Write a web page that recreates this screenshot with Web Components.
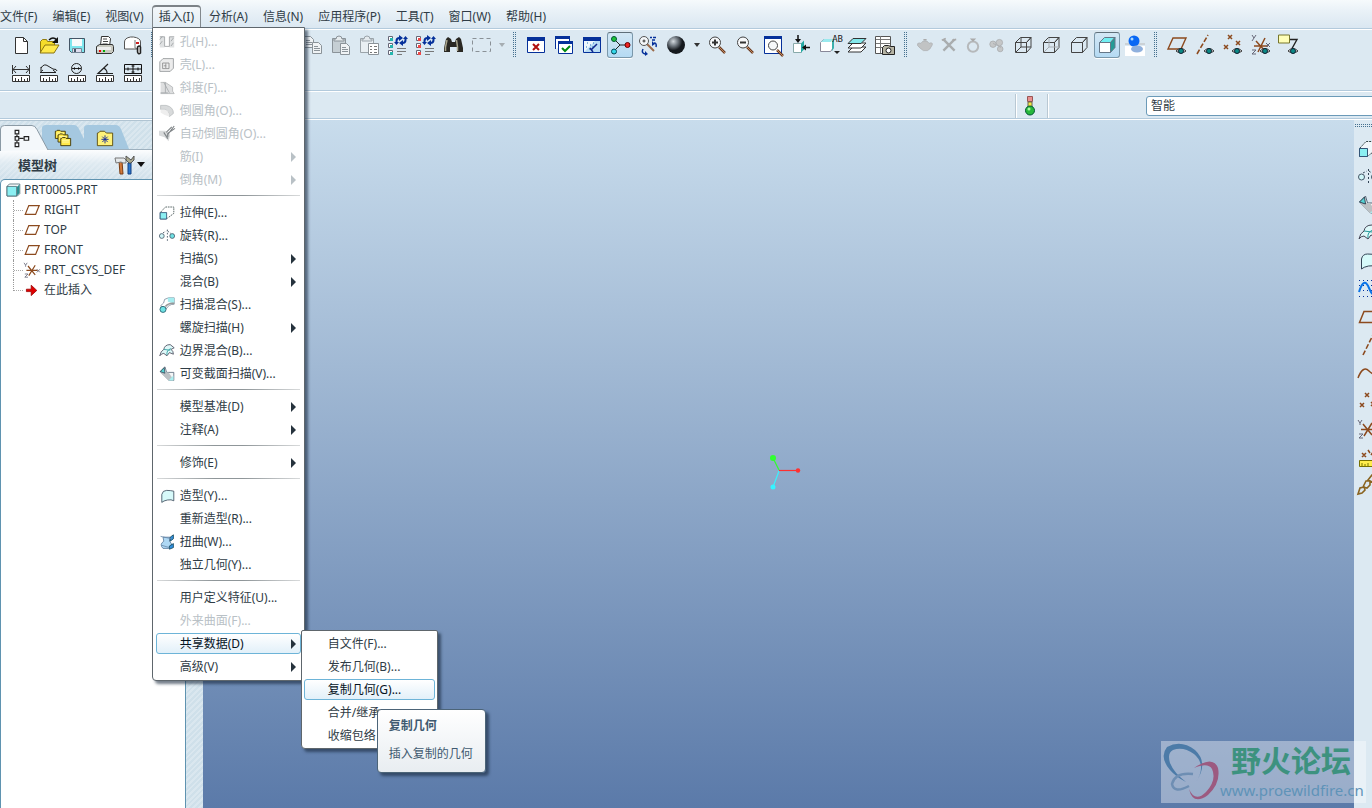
<!DOCTYPE html>
<html lang="zh-CN">
<head>
<meta charset="utf-8">
<title>PRT0005</title>
<style>
html,body{height:100%}
body{margin:0;overflow:hidden;font:12px/16px "Noto Sans","Noto Sans CJK SC",sans-serif;color:#2f3c46;
--bar:#dce9f2;--edge:#b3cadc;--ink:#2f3c46}
</style>
</head>
<body>
<cad-window>
  <cad-menubar slot="menubar">
    <menubar-item>文件(F)</menubar-item>
    <menubar-item>编辑(E)</menubar-item>
    <menubar-item>视图(V)</menubar-item>
    <menubar-item open>插入(I)
      <menu-panel slot="menu">
        <menu-item icon="hole" disabled>孔(H)...</menu-item>
        <menu-item icon="shell" disabled>壳(L)...</menu-item>
        <menu-item icon="draft" disabled>斜度(F)...</menu-item>
        <menu-item icon="round" disabled>倒圆角(O)...</menu-item>
        <menu-item icon="autoround" disabled>自动倒圆角(O)...</menu-item>
        <menu-item more disabled>筋(I)</menu-item>
        <menu-item more disabled>倒角(M)</menu-item>
        <menu-separator></menu-separator>
        <menu-item icon="extrude">拉伸(E)...</menu-item>
        <menu-item icon="revolve">旋转(R)...</menu-item>
        <menu-item more>扫描(S)</menu-item>
        <menu-item more>混合(B)</menu-item>
        <menu-item icon="sweepblend">扫描混合(S)...</menu-item>
        <menu-item more>螺旋扫描(H)</menu-item>
        <menu-item icon="boundary">边界混合(B)...</menu-item>
        <menu-item icon="varsweep">可变截面扫描(V)...</menu-item>
        <menu-separator></menu-separator>
        <menu-item more>模型基准(D)</menu-item>
        <menu-item more>注释(A)</menu-item>
        <menu-separator></menu-separator>
        <menu-item more>修饰(E)</menu-item>
        <menu-separator></menu-separator>
        <menu-item icon="style">造型(Y)...</menu-item>
        <menu-item>重新造型(R)...</menu-item>
        <menu-item icon="warp">扭曲(W)...</menu-item>
        <menu-item>独立几何(Y)...</menu-item>
        <menu-separator></menu-separator>
        <menu-item>用户定义特征(U)...</menu-item>
        <menu-item disabled>外来曲面(F)...</menu-item>
        <menu-item more current>共享数据(D)
          <menu-panel slot="over" class="sub">
            <menu-item>自文件(F)...</menu-item>
            <menu-item>发布几何(B)...</menu-item>
            <menu-item current>复制几何(G)...
              <help-tip slot="over"><span slot="title">复制几何</span>插入复制的几何</help-tip>
            </menu-item>
            <menu-item>合并/继承</menu-item>
            <menu-item>收缩包络</menu-item>
          </menu-panel>
        </menu-item>
        <menu-item more>高级(V)</menu-item>
      </menu-panel>
    </menubar-item>
    <menubar-item>分析(A)</menubar-item>
    <menubar-item>信息(N)</menubar-item>
    <menubar-item>应用程序(P)</menubar-item>
    <menubar-item>工具(T)</menubar-item>
    <menubar-item>窗口(W)</menubar-item>
    <menubar-item>帮助(H)</menubar-item>
  </cad-menubar>

  <cad-toolbars slot="toolbars"></cad-toolbars>
  <status-bar slot="status"></status-bar>

  <model-tree slot="tree" heading="模型树">
    <tree-node icon="part" root>PRT0005.PRT</tree-node>
    <tree-node icon="plane">RIGHT</tree-node>
    <tree-node icon="plane">TOP</tree-node>
    <tree-node icon="plane">FRONT</tree-node>
    <tree-node icon="csys">PRT_CSYS_DEF</tree-node>
    <tree-node icon="insert" last>在此插入</tree-node>
  </model-tree>
  <graphics-view slot="view"></graphics-view>
  <feature-bar slot="features"></feature-bar>
  <forum-mark slot="mark"><span slot="name">野火论坛</span>www.proewildfire.cn</forum-mark>
</cad-window>

<script>
const define = (name, css, html, setup) => {
  const template = document.createElement('template');
  template.innerHTML = `<style>:host,*{box-sizing:border-box}${css}</style>${html}`;
  customElements.define(name, class extends HTMLElement {
    connectedCallback() {
      if (this.shadowRoot) return;
      this.attachShadow({mode: 'open'}).append(template.content.cloneNode(true));
      if (setup) setup(this, this.shadowRoot);
    }
  });
};

/* Icons share a 20 x 20 grid. */
const eye = '<path d="M9 16q5-5 10 0q-5 4-10 0z" fill="#fff" stroke="#333"/><circle cx="14" cy="16" r="2.500" fill="#0a8a86" stroke="#123"/>';
const ruler = '<path d="M1.500 12.500h17v6h-17z" fill="#fff" stroke="#333"/><path d="M4.500 18v-3M7.500 18v-2M10.500 18v-4M13.500 18v-2M16.500 18v-3" stroke="#333"/>';
const cube = (c, face='none', top='none', side='none') => `<path d="M2.500 7.500h11v10h-11z" fill="${face}" stroke="${c}"/><path d="M2.500 7.500l5-5h10.500l-4.500 5z" fill="${top}" stroke="${c}"/><path d="M13.500 7.500l4.500-5v10l-4.500 5z" fill="${side}" stroke="${c}"/>`;
const glass = '<path d="M12 12l6 6" stroke="#6b3a20" stroke-width="2.500"/><path d="M12 12l6 6" stroke="#c08a60"/><circle cx="8" cy="7.500" r="5.500" fill="#f6f8fa" stroke="#444"/>';
const win = '<path d="M1.500 2.500h17v15h-17z" fill="#fff" stroke="#05309a" /><path d="M1 2h18v4H1z" fill="#05309a"/>';
const checklist = c => `<g fill="#fff" stroke="#667"><path d="M1.500 1.500h4v4h-4zM1.500 8.500h4v4h-4zM1.500 15.500h4v4h-4z"/></g><path d="M3 3h3v3H3zM3 10h3v3H3zM3 17h3v3H3z" fill="${c}"/><path d="M10 13.500h9M10 16.500h9M10 19.500h5" stroke="#777"/><path d="M9.500 7V6q0-3 3-3M18.500 3v2q0 3-3 3" fill="none" stroke="#05309a" stroke-width="2"/><path d="M12 0l4 3-4 3zM16 5l-4 3 4 3zM7 7h5l-2.500 3zM16 4h5l-2.500-3z" fill="#05309a"/>`;
const page = (x,y,c='#8b9399') => `<path d="M${x+.5} ${y+.5}h6l3 3v8h-9z" fill="#f0f3f5" stroke="${c}"/><path d="M${x+2} ${y+4.5}h4M${x+2} ${y+6.5}h6M${x+2} ${y+8.5}h6" stroke="${c}"/>`;
const board = '<path d="M1.500 3.500h13v14h-13z" fill="#c6cfd4" stroke="#8b9399"/><path d="M5 4q0-3 3-3t3 3h2v2H3V4z" fill="#e6ebee" stroke="#8b9399"/>';
const folder = (x,y) => `<path d="M${x+.5} ${y+9.5}v-8h1l1-1h3l1 1h5v8z" fill="#ffe94a" stroke="#3a3208"/><path d="M${x+2} ${y+3.5}h8M${x+2} ${y+5.5}h8" stroke="#fff8b0"/>`;
const cross = (x,y,s=2) => `M${x-s} ${y-s}l${2*s} ${2*s}M${x+s} ${y-s}l${-2*s} ${2*s}`;
const icons = {
  new:'<path d="M4.500 2.500h8l4 4v12h-12z" fill="#fff" stroke="#333"/><path d="M12.500 2.500v4h4" fill="none" stroke="#333"/>',
  open:'<path d="M1.500 18V6.500l2-2h4l1 2h7V10" fill="#f5dc2a" stroke="#907a10"/><path d="M1 18l5-8h14l-5 8z" fill="#ffe94a" stroke="#8a7410"/><path d="M10 5q4-4 8 0" fill="none" stroke="#111" stroke-width="1.500"/><path d="M19 2v6h-6z" fill="#111"/>',
  save:'<path d="M2.500 3.500h15v14h-13l-2-2z" fill="#7fe6ee" stroke="#456"/><path d="M5 4h10v7H5z" fill="#f8fbfc"/><path d="M5.500 13.500h9v4h-9z" fill="#dde" stroke="#789"/><path d="M7 14h2v3H7z" fill="#456"/>',
  print:'<path d="M5.500 10.500l1-9h7l2 2-1 8z" fill="#fff" stroke="#333"/><path d="M8 4h4M8 6.500h5M7.500 9h5" stroke="#444"/><path d="M1.500 11.500l3-2h13l1 2v5l-2 2h-15z" fill="#c8c9c0" stroke="#333"/><path d="M2 12h14v3H2z" fill="#eee"/><path d="M4 15h2v2H4z" fill="#e00"/><path d="M8 15h2v2H8z" fill="#0a0"/>',
  mail:'<path d="M1.500 14V7q0-4 6-5h3q7 1 7 5v7z" fill="#fff" stroke="#555"/><path d="M12 5v8l3 1" fill="none" stroke="#777"/><path d="M13 7h3v2h-3z" fill="#c22"/><path d="M14.500 17v-5q2-2 3 0v6q-2 2-3-1z" fill="#ddd" stroke="#222" stroke-width="1.500"/>',
  m1:ruler+'<path d="M1.500 2v9M18.500 2v9M2 6.500h16M5 3L2 6.500 5 10M15 3l3 3.500L15 10" fill="none" stroke="#333"/>',
  m2:ruler+'<path d="M2 5q3-5 7-2l5 3q4 0 4 2M1 9.500h16M4 7L1 9.500M14 7l3 2.500M2 4v4" fill="none" stroke="#222"/>',
  m3:ruler+'<circle cx="9.500" cy="5.500" r="5" fill="none" stroke="#222"/><path d="M5 5.500h9" stroke="#222"/><path d="M8 4v3l-2-1.500zM11 4v3l2-1.500z"/>',
  m4:ruler+'<path d="M13 1L3 10.500h15M9 5q3 2 3 5" fill="none" stroke="#222" stroke-width="1.200"/>',
  m5:ruler+'<path d="M1.500 1.500h17v9h-17zM10 1.500v9M1.500 6h17" fill="none" stroke="#111"/><path d="M5 4.500v3M15 4.500v3M8.500 3h3M8.500 9h3" stroke="#111"/>',
  cut:'<path d="M6 2l6 11M14 2L8 13" stroke="#889"/><circle cx="7" cy="15" r="2" fill="none" stroke="#889"/><circle cx="13" cy="15" r="2" fill="none" stroke="#889"/>',
  undo:'<path d="M5 9q6-6 10 0v5" fill="none" stroke="#889" stroke-width="2"/><path d="M3 5v6h6z" fill="#889"/>',
  redo:'<path d="M15 9q-6-6-10 0v5" fill="none" stroke="#889" stroke-width="2"/><path d="M17 5v6h-6z" fill="#889"/>',
  copy:page(1,1)+page(9,7), paste:board+page(9,8),
  pastes:'<g opacity=".8">'+board.replace('#c6cfd4','#edf1f4')+'</g><path d="M9.500 8.500h10v11h-10z" fill="#fff" stroke="#8b9399"/><path d="M11 11.500h2M11 14.500h2M11 17.500h2M15 11.500h3M15 14.500h3M15 17.500h3" stroke="#777"/>',
  regen:checklist('#23b6ae'), regenm:checklist('#f04848'),
  find:'<path d="M3 4l2-2 3 2 1 3h3l1-3 3-2 2 2 2 9v4h-6v-5H7v5H1v-4z" fill="#2a2823"/><path d="M4 5L2.500 12v4M13.500 5l1 7v4" stroke="#a9a48c" stroke-width="1.500" fill="none"/>',
  select:'<path d="M1.500 3.500h18v13h-18z" fill="none" stroke="#8a9197" stroke-dasharray="4 3"/>',
  winclose:win+'<path d="M7 9l6 6M13 9l-6 6" stroke="#b01010" stroke-width="2"/>',
  wincheck:'<path d="M1.500 14V2h14v5" fill="#fff" stroke="#05309a"/><path d="M1 1h15v3H1z" fill="#05309a"/><path d="M4.500 6.500h14v12h-14z" fill="#fff" stroke="#05309a"/><path d="M4 6h15v3H4z" fill="#05309a"/><path d="M8 13l3 3 5-5" fill="none" stroke="#008a10" stroke-width="2"/>',
  repaint:win+'<path d="M2 6h16v11H2z" fill="#b9dcf4"/><path d="M2 17L13 6H2z" fill="#eef7fd"/><path d="M5 8h1M8 10h1M4 12h1M11 8h1M7 14h2M10 12h2" stroke="#27b"/><path d="M15 9l-6 6M8 13l3 4" stroke="#10268c" stroke-width="1.500" fill="none"/>',
  spin:'<path d="M4 4l6 6h8M10 10l-6 6" fill="none" stroke="#222"/><circle cx="4" cy="4" r="2.500" fill="#1ec23c" stroke="#053"/><circle cx="17.500" cy="10" r="2.500" fill="#e22" stroke="#600"/><circle cx="4" cy="16.500" r="2.500" fill="#35d8e8" stroke="#045"/>',
  orient:'<path d="M9 9l7 7" stroke="#9b6a49" stroke-width="2"/><circle cx="6" cy="6" r="4.500" fill="#f4f7f9" stroke="#555"/><path d="M6 4.500v3M4.500 6h3" stroke="#333"/><path d="M12 2.500h2M15 2.500h3M14 5h3M16 8q3 0 2 4M5 14q-2 4 2 5" fill="none" stroke="#05309a" stroke-width="1.500"/><path d="M14 6v5l3-2zM7 16v5l3-2z" fill="#05309a"/>',
  sphere:'<defs><radialGradient id="s" cx=".35" cy=".3"><stop stop-color="#d3d9de"/><stop offset=".5" stop-color="#727a82"/><stop offset="1" stop-color="#15191e"/></radialGradient></defs><circle cx="10" cy="10" r="9" fill="url(#s)"/>',
  zoomin:glass+'<path d="M5 7.500h6M8 4.500v6" stroke="#333" stroke-width="2"/>',
  zoomout:glass+'<path d="M5 7.500h6" stroke="#333" stroke-width="2"/>',
  refit:'<path d="M1.500 1.500h17v17h-17z" fill="#fff" stroke="#05309a"/><path d="M1 1h18v3H1z" fill="#05309a"/><g transform="translate(2 3)">'+glass.replace('5.500"','4.500"')+'</g>',
  fit:'<path d="M2.500 8.500h8v9h-8z" fill="#fff" stroke="#8aa"/><path d="M10 8.500l3-3v9l-3 3z" fill="#24a9a4"/><path d="M7 0v5M19 12.500h-5" stroke="#111" stroke-width="1.500"/><path d="M4 4h6L7 8zM15 9.500v6l-4-3z"/>',
  named:'<path d="M1.500 7.500l3-3h10v8l-3 4h-10z" fill="#fff" stroke="#889"/><path d="M5 4h9l-2 3H2z" fill="#9ae9ee"/><path d="M13 6l2-2v9l-2 3z" fill="#3bb1ad"/><path d="M15 16h6l-3 3z" fill="#222"/>',
  layers:'<g stroke="#333" fill="#fff"><path d="M1 17l5-5h13l-5 5z"/><path d="M1 13l5-5h13l-5 5z"/><path d="M1 8.500l5-5h13l-5 5z" fill="#83e7ea"/></g>',
  camera:'<path d="M.5 1.500h15v17H.5z" fill="#fff" stroke="#555"/><path d="M5.500 1v17M1 4.500h14M1 8.500h14M1 12.500h14" stroke="#777"/><path d="M7.500 12.500l2-2h4l2 1h4v8h-12z" fill="#b6b4a4" stroke="#222"/><circle cx="13.500" cy="15.500" r="2.500" fill="#fff" stroke="#222"/>',
  teapot:'<path d="M5 8q1-3 5-3t5 3q5-2 4 2l-3 5-3 2H8l-4-3q-5-4-3-6 2-1 4 0z" fill="#c1c3c4" stroke="#adb0b2"/><path d="M8 3.500h4" stroke="#aaa" stroke-width="2"/>',
  tools:'<path d="M3 3l14 14M17 3L3 17" stroke="#a9adaf" stroke-width="3"/><path d="M1 4l5-2M14 4l5-1" stroke="#aaa" stroke-width="2"/>',
  ring:'<circle cx="10" cy="12" r="6.500" fill="none" stroke="#b6b9bb" stroke-width="2.500"/><path d="M6 2h8l-4 4z" fill="#aaa"/>',
  balls:'<g fill="#c5c7c8" stroke="#a9acae"><circle cx="5" cy="9" r="4"/><circle cx="13" cy="7" r="4"/><circle cx="14" cy="15" r="3.500"/><path d="M5 8l10 5"/></g>',
  wire:cube('#444')+'<path d="M3 17l5-5V3M8 12h10" fill="none" stroke="#444"/>',
  hidden:cube('#444')+'<path d="M3 17l5-5V3M8 12h10" fill="none" stroke="#a8adb2"/>',
  nohidden:cube('#444'),
  shaded:cube('#678','#fff','#72eff2','#249b96'),
  light:'<path d="M0 11h20v10H0z" fill="#fff"/><path d="M0 9h20" stroke="#bbb"/><circle cx="9" cy="6" r="5.500" fill="#0867f4"/><circle cx="7" cy="4" r="1.500" fill="#a9d8ff"/><ellipse cx="12" cy="14" rx="6" ry="3.500" fill="#8fb0dd"/>',
  plane:'<path d="M1.500 15.500l4.500-11h13l-4.500 11z" fill="none" stroke="#8c4a1e" stroke-width="1.500"/>',
  vplane:'<path d="M1 14l5-11h13l-5 11z" fill="none" stroke="#8c4a1e" stroke-width="1.400"/>'+eye,
  vaxis:'<path d="M2 19L13 0" stroke="#8c4a1e" stroke-width="1.600" stroke-dasharray="5 2"/>'+eye,
  vpoint:`<path d="${cross(7,2)}${cross(15,8)}${cross(3,12)}" stroke="#8c4a1e" stroke-width="1.500"/>`+eye,
  vcsys:'<path d="M3 11h14M5 6l9 10M14 3L7 17" stroke="#8c4a1e" stroke-width="1.500"/><path d="M1 0l2 3 2-3M3 3L1 6M15 8l4 4M19 8l-4 4M1 15h4l-4 4h4" fill="none" stroke="#667"/>'+eye,
  vnote:'<path d="M-.5 0h11v8h-11z" fill="#ffffb8" stroke="#77762c"/><path d="M11 4.500h7l-5 9" fill="none" stroke="#222" stroke-width="1.400"/>'+eye,
  csys:'<path d="M3 10.500h14M5 5l9 11M14 4L6 17" stroke="#8c4a1e" stroke-width="1.500"/><path d="M0 1l2 3 2-3M2 4v2M16 9l4 4M20 9l-4 4M1 15h4l-4 4h4" fill="none" stroke="#667"/>',
  part:'<path d="M2.500 5.500l3-3h13v12l-3 3h-13z" fill="#fff" stroke="#45656e"/><path d="M2.500 5.500h12v12h-12z" fill="#8beff2" stroke="#45656e"/><path d="M15 6l3-3v11l-3 3z" fill="#2a8e90"/>',
  insert:'<path d="M3 9h6V4l7 6.500L9 17v-5H3z" fill="#e00000" stroke="#900"/>',
  tabtree:'<g fill="none" stroke="#222" stroke-width="1.300"><path d="M3.500 1.500h4v4h-4zM3.500 8.500h4v4h-4zM3.500 15.500h4v4h-4zM13.500 8.500h5v4h-5z"/><path d="M5.500 6v2M5.500 13v2M8 10.500h5"/></g>',
  tabfolders:folder(1,1)+folder(4,5)+folder(7,9),
  tabfav:'<path d="M1.500 18.500v-14h1l2-2h5l2 2h7v14z" fill="#fff27a" stroke="#5a4a08"/><path d="M10 7v9M6 11.500h8M7 8.500l6 6M13 8.500l-6 6" stroke="#12289b"/>',
  hammer:'<path d="M5 6h3l1 13H6z" fill="#d2793a" stroke="#7a3d14"/><path d="M1 3h9l2 2v3H9l-2-1-5 1z" fill="#e4e8ea" stroke="#777"/><path d="M14 8h3v11h-3z" fill="#2a78d0" stroke="#123f80"/><path d="M12 1v4l3 3h2l3-3V1l-3 4z" fill="#aaa98e" stroke="#555"/>',
  bulb:'<path d="M7.500.5h5v5h-5z" fill="#e89090" stroke="#955"/><path d="M8 6h4v5H8z" fill="#f8e840" stroke="#665"/><circle cx="10" cy="14.500" r="4.500" fill="#26b83c" stroke="#053"/><circle cx="9" cy="13" r="1.500" fill="#a9f5a4"/>',
  hole:'<path d="M1 3h6v14H1zM13 3h6v14h-6z" fill="#dfe1e2"/><path d="M1 3.500h6v12h6v-12h6M4 3l-3 4M4 9l-3 4M18 5l-3 4M18 11l-3 4" fill="none" stroke="#999da0"/>',
  shell:'<path d="M1 6l4-4h13v12l-4 4H1z" fill="#ececec" stroke="#8f9396"/><path d="M4.500 7.500h8v7h-8zM8.500 8v6M6 11h3" fill="none" stroke="#888"/>',
  draft:'<path d="M2 3h6l9 6v5l2 3H2" fill="#dedfe0" stroke="#b0b2b4"/><path d="M6 3l7 13M8 3v13M2 16h9" stroke="#a1a5a8" fill="none"/>',
  round:'<path d="M2 3h7q9 2 9 10l-5 4q0-7-5-9H2z" fill="#d8dadb" stroke="#b9bcbe"/><path d="M2 8h5q6 2 6 9l-6-2-5-3z" fill="#eee"/>',
  autoround:'<path d="M0 6h8l6 5-2 8-5-5-7-2z" fill="#d8dadb"/><path d="M10 12L19 0M9 8l7-7M11 14V9l9-6M6 8l5 8" stroke="#7e8386" stroke-width="1.400" fill="none"/>',
  extrude:'<path d="M1.500 9.500h8v8h-8z" fill="#8beff2" stroke="#357"/><path d="M2 9l6-6.500h10.500v8l-8 6" fill="#fff" fill-opacity=".6" stroke="#344" stroke-dasharray="2 1"/><path d="M1.500 9.500h8v8h-8z" fill="#8beff2" stroke="#357"/>',
  revolve:'<circle cx="3.500" cy="10" r="3" fill="#cff6f8" stroke="#456"/><circle cx="16.500" cy="10" r="3" fill="#6fe2e4" stroke="#456"/><path d="M5 6l4-2M11 4l4 3M10.500 2v14" stroke="#345" fill="none" stroke-dasharray="2 2"/>',
  sweepblend:'<path d="M2 11q5-3 5-8l5-2h7v8q-7 0-10 6z" fill="#fff" stroke="#789"/><path d="M11 1h8v7l-8-2z" fill="#a5edf0"/><circle cx="5" cy="15.500" r="3.800" fill="#6fe2e4" stroke="#256"/><path d="M8 12q4-5 11-4" stroke="#999" stroke-width="2" fill="none"/>',
  boundary:'<path d="M1 16q1-6 5-8 1-6 8-6l5 4-4 2q3 2 3 6l-5-2-3 4-4-3q-3 0-5 3z" fill="#dff8f9" stroke="#445"/><path d="M6 8l8 1M10 15q-1-6 5-8" fill="none" stroke="#259a9a"/>',
  varsweep:'<path d="M1.500 7l6-6 2 7h9v10h-6z" fill="#f4f6f7" stroke="#567"/><path d="M8 8l4 0 6 9v1h-6L2 8z" fill="#bcc1c4"/><path d="M1.500 7l5-5 1 7z" fill="#55d4d4" stroke="#345"/><path d="M12 18l6-6v6z" fill="#a9eff0"/>',
  style:'<path d="M3.500 18V8q1-5 6-5t9 1v12q-3-2-8-1t-7 3z" fill="#d7fafa" stroke="#345"/>',
  warp:'<path d="M5 4h9l-1 5q6 5-1 9H5q-5-5 1-9z" fill="#aed8f4" stroke="#579"/><path d="M14 4l4-3v5l-4 3zM13 15l5-3v5l-5 2z" fill="#2d8fe0" stroke="#145"/><path d="M2 3l14 3M3 14l10 3" stroke="#68a"/>',
  curve:'<path d="M1 1.500h19M1 6.500h19M1 11.500h19M1 17.500h19" stroke="#05309a" stroke-dasharray="1 3"/><path d="M1 13q5-16 10-4t9 4" fill="none" stroke="#0a74e8" stroke-width="2"/>',
  axis:'<path d="M5 20L15 0" stroke="#8c4a1e" stroke-width="1.600" stroke-dasharray="5 2"/>',
  spline:'<path d="M0 15q5-13 11-7t9 0" fill="none" stroke="#8c4a1e" stroke-width="1.500"/>',
  points:`<path d="${cross(9,4)}${cross(4,14)}${cross(15,13)}" stroke="#8c4a1e" stroke-width="1.500"/>`,
  measure:`<path d="M1.500 13.500h18v6h-18z" fill="#ffed4c" stroke="#777000"/><path d="M4 19v-3M7 19v-2M10 19v-3" stroke="#770"/><path d="${cross(6,8)}M10 3l2 3M15 5l-2 3" stroke="#8c4a1e" stroke-width="1.500"/>`,
  chain:'<path d="M0 19l2-6 4-1 1 3-3 3zM5 12l3-6 4 0 0 4-3 3zM10 5l4-5 4 1 0 3-4 3z" fill="none" stroke="#8a6420" stroke-width="1.600"/>'
};

define('cad-icon', ':host{display:block;width:20px;height:20px;flex:none}svg{display:block;width:100%;height:100%;overflow:visible}',
  '<svg viewBox="0 0 20 20" fill="none" aria-hidden="true"></svg>',
  (host, root) => {
    const svg = root.querySelector('svg');
    svg.setAttribute('fill', '#111');
    svg.innerHTML = icons[host.getAttribute('name')] || '';
  });

define('cad-window', `
:host{display:grid;grid-template-rows:auto auto auto minmax(0,1fr);min-height:100vh;position:relative;background:var(--bar);overflow:hidden}
.top{position:relative;z-index:5}
main{display:grid;grid-template-columns:203px minmax(0,1fr) 18px;min-height:0}
`, `<div class="top"><slot name="menubar"></slot></div><slot name="toolbars"></slot><slot name="status"></slot>
<main><slot name="tree"></slot><slot name="view"></slot><slot name="features"></slot></main><slot name="mark"></slot>`);

define('cad-menubar', `
:host{display:flex;gap:1px;height:28px;padding-top:5px;margin-left:-7px;background:linear-gradient(#f6fafc,#e9f1f7 40%,#dae7f1)}
`, '<slot></slot>');

define('menubar-item', `
:host{display:block;position:relative}
button{height:22px;border:1px solid transparent;border-bottom:0;padding:0 6px;background:none;font:inherit;color:var(--ink);white-space:nowrap;display:block}
:host([open]) button{border-color:#82888d;border-top:2px solid #7c8287;border-radius:4px 4px 0 0;background:linear-gradient(#f3f7fa,#e2edf4);padding-bottom:1px}
.pop{position:absolute;top:22px;left:0}
`, '<button type="button"><slot></slot></button><div class="pop"><slot name="menu"></slot></div>');

define('menu-panel', `
:host{display:block;width:153px;padding:2px 3px;border:1px solid #5e666c;border-radius:0 0 4px 4px;background:#fff;box-shadow:3px 3px 3px #18283c99}
:host(.sub){position:absolute;left:100%;top:-2px;width:137px;padding:1px 2px;border-radius:2px 2px 4px 4px}
`, '<slot></slot>');

define('menu-item', `
:host{display:block;position:relative;padding:1px 0}
button{display:flex;align-items:center;width:100%;height:21px;border:1px solid transparent;border-radius:3px;padding:0 4px 0 1px;background:none;font:inherit;color:var(--ink);text-align:left;white-space:nowrap}
:host([current]) button{border-color:#6db4d8;background:linear-gradient(#fff,#e2f0f9);color:#05131e}
:host([disabled]) button{color:#b9c1c6}
cad-icon{width:16px;height:16px;margin:0 5px 0 1px}
.label{flex:1}
.more{display:none;border:5px solid transparent;border-left-color:#26333d;border-right:0}
:host([more]) .more{display:block}
:host([disabled]) .more{border-left-color:#b9c1c6}
`, '<button type="button"><cad-icon></cad-icon><span class="label"><slot></slot></span><span class="more"></span></button><slot name="over"></slot>',
  (host, root) => {
    if (host.hasAttribute('disabled')) root.querySelector('button').disabled = true;
    const icon = document.createElement('cad-icon');
    icon.setAttribute('name', host.getAttribute('icon') || '');
    root.querySelector('cad-icon').replaceWith(icon);
  });

define('menu-separator', ':host{display:block;height:10px;padding:4px 1px 0}hr{height:1px;border:0;margin:0;background:linear-gradient(90deg,#d8dadb,#8f9699 40%,#8f9699 60%,#d8dadb)}', '<hr>');

define('help-tip', `
:host{display:flex;flex-direction:column;gap:12px;position:absolute;z-index:2;left:73px;top:31px;width:109px;height:64px;padding:8px 11px;border:1px solid #4c6478;border-radius:4px;background:linear-gradient(#fff,#e8edf1);box-shadow:3px 3px 3px #18283c99;color:#3f5a70;white-space:nowrap}
b{font-weight:700}
`, '<b><slot name="title"></slot></b><span><slot></slot></span>');

define('tool-button', `
:host{display:block;flex:none;width:28px}
:host([narrow]){width:24px}
button{display:grid;place-items:center;width:26px;height:26px;margin:1px auto;border:1px solid transparent;border-radius:3px;padding:0;background:none}
:host([narrow]) cad-icon{width:16px;height:16px}
:host([narrow]) button{width:24px}
:host([pressed]) button{border-color:#7b98ab;border-top-color:#5f6f7a;background:linear-gradient(#d3e7f5,#b5daf3);box-shadow:0 1px #fff}
:host([caret]){width:13px}
:host([caret]) button{width:13px;border:0}
i{border:3px solid transparent;border-top:4px solid #333;border-bottom:0}
:host([faint]) i{border-top-color:#a6adb2}
`, '<button type="button"></button>',
  (host, root) => {
    const button = root.querySelector('button');
    if (host.hasAttribute('caret')) { button.innerHTML = '<i></i>'; return; }
    button.innerHTML = `<cad-icon name="${host.getAttribute('icon')}"></cad-icon>`;
  });

define('tool-grip', ':host{display:grid;place-items:center;flex:none;width:14px;height:28px}i{width:4px;height:26px;background:conic-gradient(transparent 75%,#45708f 0) 0 0/2px 2px}', '<i></i>');

const buttons = (names, extra = '') => names.split(' ').map(n => `<tool-button icon="${n}" ${extra}></tool-button>`).join('');

define('cad-toolbars', `
:host{display:block;border-top:1px solid var(--edge);border-bottom:1px solid var(--edge);box-shadow:inset 0 1px #fff;padding:2px 0 3px 7px;background:var(--bar);height:63px;overflow:hidden}
div{display:flex}
.grip{width:12px}
`, `<div>${buttons('new open save print mail')}<tool-grip class="grip"></tool-grip>${buttons('cut undo redo cut undo copy paste pastes regen regenm find select')}<tool-button caret faint></tool-button><tool-grip></tool-grip>
${buttons('winclose wincheck repaint')}${buttons('spin','pressed')}${buttons('orient sphere')}<tool-button caret></tool-button>${buttons('zoomin zoomout refit fit')}<named-views></named-views>${buttons('layers camera')}<tool-grip></tool-grip>
${buttons('teapot tools ring balls','narrow')}${buttons('wire hidden nohidden')}${buttons('shaded','pressed')}${buttons('light')}<tool-grip></tool-grip>${buttons('vplane vaxis vpoint vcsys vnote')}</div>
<div>${buttons('m1 m2 m3 m4 m5')}</div>`);

define('named-views', `
:host{display:block;position:relative;width:28px;flex:none}
span{position:absolute;right:0;top:3px;font:9px/10px "DejaVu Sans Mono",monospace;color:#222}
`, '<tool-button icon="named"></tool-button><span>AB</span>');

define('status-bar', `
:host{display:flex;justify-content:flex-end;align-items:center;height:29px;background:var(--bar);border-top:1px solid #fff;border-bottom:1px solid #fff;box-shadow:inset 0 -1px var(--edge);overflow:hidden}
.light{display:grid;place-items:center;width:33px;height:24px;border:solid #b9c8d3;border-width:0 1px;box-shadow:1px 0 #fff,inset 1px 0 #fff;margin-right:98px;padding-right:3px}
.filter{width:226px;overflow:hidden}
select{appearance:none;width:250px;height:20px;border:1px solid #6b9ab8;border-radius:3px;background:#fff;padding:0 4px;font:inherit;color:var(--ink);display:block}
`, `<span class="light"><cad-icon name="bulb"></cad-icon></span><div class="filter"><select aria-label="过滤器"><option>智能</option></select></div>`);

define('model-tree', `
:host{display:grid;grid-template-rows:29px 30px minmax(0,1fr);min-height:0;padding-right:17px;
background:repeating-linear-gradient(135deg,#cfe0ea 0 2px,#dae7ef 2px 4px)}
nav{display:flex;padding-top:4px;border-top:1px solid #b0c4d2}
.tab{position:relative;display:block;width:42px;height:25px;border:0;padding:0;background:none}
.tab>svg{position:absolute;left:0;top:0;width:54px;height:25px;overflow:visible}
.tab cad-icon{position:relative;width:18px;height:18px;margin:0 0 0 12px}
.t1{z-index:3}.t2{z-index:2}.t3{z-index:1}
header{display:flex;align-items:center;padding-left:18px;background:linear-gradient(#fcfdfe,#eaf1f699 45%,#cbdde900);border-top:1px solid #9db0be}
h2{margin:0;font-size:13px;line-height:18px;flex:1}
.set{display:flex;align-items:center;gap:3px;border:0;padding:0;background:none;margin-right:41px}
.set i{border:4px solid transparent;border-top:5px solid #111;border-bottom:0}
.list{background:#fff;border:solid #5f93b0;border-width:1px 1px 0;border-radius:5px 5px 0 0}
`, `<nav>
<button class="tab t1" type="button" aria-label="模型树"><svg viewBox="0 0 54 25"><path d="M.5 26V4q0-3.500 4-3.500H32q3 0 5 4L48 25" fill="#f4f8fb" stroke="#8b9aa5"/></svg><cad-icon name="tabtree"></cad-icon></button>
<button class="tab t2" type="button" aria-label="文件夹"><svg viewBox="0 0 54 25"><path d="M0 24V3q0-3 4-3H32q3 0 5 4L47 24z" fill="#a5c8e0"/></svg><cad-icon name="tabfolders"></cad-icon></button>
<button class="tab t3" type="button" aria-label="收藏夹"><svg viewBox="0 0 54 25"><path d="M0 24V3q0-3 4-3H32q3 0 5 4L45 24z" fill="#a5c8e0"/></svg><cad-icon name="tabfav"></cad-icon></button>
</nav>
<header><h2></h2><button class="set" type="button" aria-label="设置"><cad-icon name="hammer"></cad-icon><i></i></button></header>
<div class="list"><slot></slot></div>`,
  (host, root) => { root.querySelector('h2').textContent = host.getAttribute('heading'); });

define('tree-node', `
:host{display:flex;align-items:center;height:20px;padding-left:12px}
cad-icon{width:16px;height:16px;margin-right:4px}
i{width:11px;height:20px;flex:none;border-left:1px dotted #999;background:linear-gradient(90deg,#aaa 50%,transparent 50%) 0 10px/2px 1px repeat-x}
:host([last]) i{height:11px;align-self:flex-start}
:host([root]){padding-left:4px}
:host([root]) i{display:none}
:host([root]) cad-icon{margin-right:3px}
`, '<i></i><cad-icon></cad-icon><slot></slot>',
  (host, root) => {
    const icon = document.createElement('cad-icon');
    icon.setAttribute('name', host.getAttribute('icon'));
    root.querySelector('cad-icon').replaceWith(icon);
  });

define('graphics-view', `
:host{display:grid;place-items:center;background:linear-gradient(#c8dcec,#5b7aa9)}
svg{display:block;width:40px;height:40px;margin:12px 2px 0 0;overflow:visible}
`, `<svg viewBox="0 0 40 40" stroke-width="1.200"><path d="M21 20.500h19" stroke="#ff3030"/><path d="M21 20l-6-12" stroke="#30ff30"/><path d="M21 21l-6 16" stroke="#35f4ff"/><circle cx="40" cy="20.500" r="2.200" fill="#ff3030"/><circle cx="15" cy="8" r="3" fill="#30ff30"/><circle cx="15" cy="37" r="2.500" fill="#35f4ff"/></svg>`);

define('feature-bar', `
:host{display:block;overflow:hidden;background:var(--bar);padding:4px 0 0 4px}
i{display:block;height:4px;margin-left:-3px;background:conic-gradient(transparent 75%,#45708f 0) 0 0/2px 2px}
.tools{display:grid;grid-auto-rows:28px;padding-top:7px}
button{display:block;width:28px;height:28px;padding:0;border:0;background:none}
`, `<i></i><div class="tools">${'extrude revolve varsweep boundary style curve plane axis spline points csys measure chain'.split(' ').map(n=>`<button type="button"><cad-icon name="${n}"></cad-icon></button>`).join('')}</div>`);

define('forum-mark', `
:host{display:flex;position:absolute;right:6px;bottom:5px;width:205px;height:62px;padding-left:2px;background:#ffffff60;white-space:nowrap}
svg{display:block;width:57px;height:62px;flex:none;overflow:visible}
div{display:flex;flex-direction:column;color:#5f93b8}
b{font:700 30px/38px "Liberation Serif","Noto Sans CJK SC",sans-serif;color:#3d927f;padding:2px 0 0 11px}
span{font-size:15px;line-height:18px}
`, `<svg viewBox="0 0 57 62"><path fill-rule="evenodd" fill="#4c7ba8" d="M33 41Q46 22 32 9Q18-2 4 6Q-4 16 7 29Q13 36 23 41Q11 32 7 22Q4 12 10 9Q20 5 31 13Q44 24 33 41z"/><path fill="#9c5a80" d="M31 27Q50 14 55 27Q58 42 45 54Q30 65 26 48Q32 62 43 51Q54 39 49 28Q45 21 31 27z"/><path d="M30 33q-18-2-21 10 2 10 17 2" fill="none" stroke="#6e8eb3" stroke-width="2.500"/></svg><div><b><slot name="name"></slot></b><span><slot></slot></span></div>`);
</script>
</body>
</html>
